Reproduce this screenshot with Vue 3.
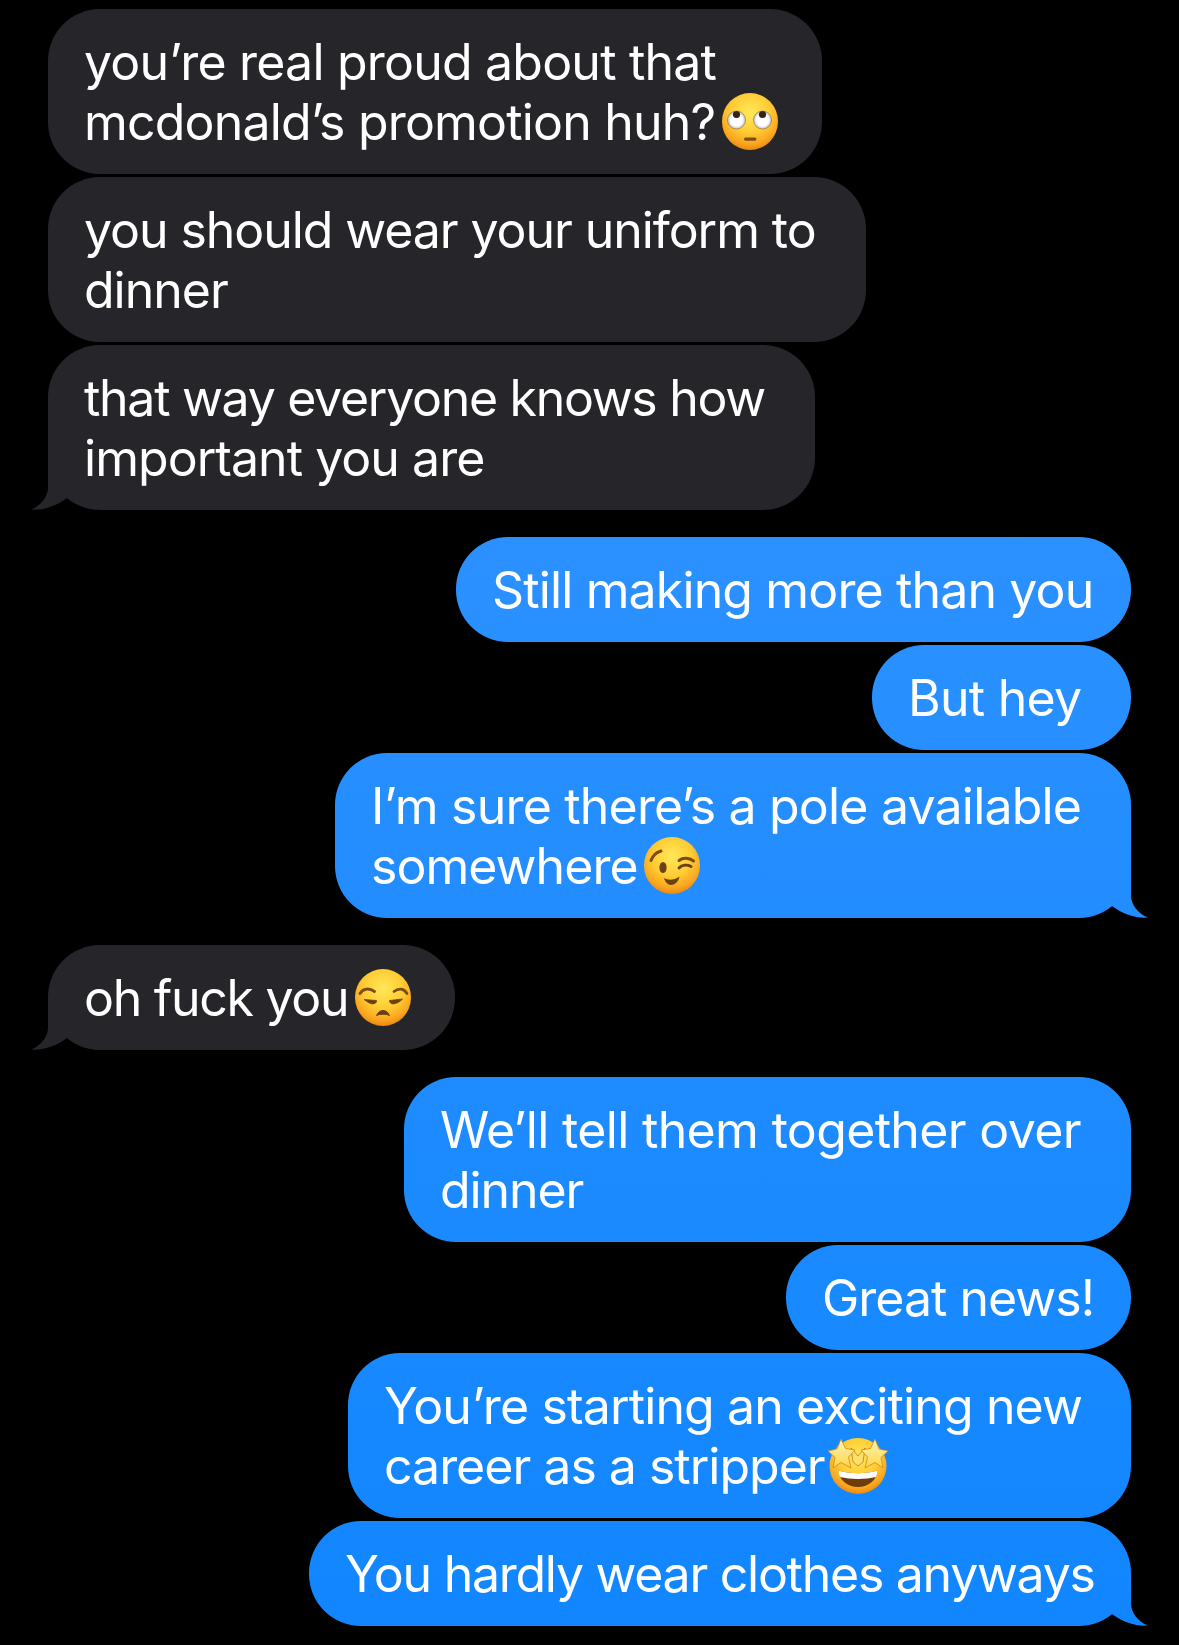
<script setup>
const groups = [
  { side: 'in', items: [
    { width: 774, lines: [['you’re real proud about that', -0.79], ['mcdonald’s promotion huh?', -0.82]], emoji: 'roll' },
    { width: 818, lines: [['you should wear your uniform to', -1.07], ['dinner', -1]] },
    { width: 767, lines: [['that way everyone knows how', -1.29], ['important you are', -0.96]], tail: true },
  ]},
  { side: 'out', items: [
    { width: 675, lines: [['Still making more than you', -0.86]] },
    { width: 259, lines: [['But hey', -0.75]] },
    { width: 796, lines: [['I’m sure there’s a pole available', -0.8], ['somewhere', -0.95]], emoji: 'wink', tail: true },
  ]},
  { side: 'in', items: [
    { width: 407, lines: [['oh fuck you', -1.28]], emoji: 'unamused', tail: true },
  ]},
  { side: 'out', items: [
    { width: 727, lines: [['We’ll tell them together over', -0.66], ['dinner', -1.07]] },
    { width: 345, lines: [['Great news!', -0.99]] },
    { width: 783, lines: [['You’re starting an exciting new', -0.87], ['career as a stripper', -1]], emoji: 'star' },
    { width: 822, lines: [['You hardly wear clothes anyways', -1.27]], tail: true },
  ]},
]
</script>

<template>
  <main class="thread">
    <svg class="defs" width="0" height="0" aria-hidden="true">
      <defs>
        <radialGradient id="face" cx="0.5" cy="0.34" r="0.7">
          <stop offset="0" stop-color="#ffe85a" />
          <stop offset="0.5" stop-color="#ffcc33" />
          <stop offset="0.8" stop-color="#f9a51f" />
          <stop offset="1" stop-color="#e67c0c" />
        </radialGradient>
        <linearGradient id="star-fill" x1="0" y1="0" x2="0" y2="1">
          <stop offset="0" stop-color="#fff6b8" />
          <stop offset="1" stop-color="#fcd445" />
        </linearGradient>
        <radialGradient id="eye-white" cx="0.5" cy="0.5" r="0.55">
          <stop offset="0.6" stop-color="#ffffff" />
          <stop offset="1" stop-color="#a9acb2" />
        </radialGradient>
      </defs>
    </svg>

    <section v-for="(group, g) in groups" :key="g" class="group" :class="group.side">
      <div v-for="(item, i) in group.items" :key="i" class="bubble" :style="{ width: item.width + 'px' }">
        <template v-for="(line, l) in item.lines" :key="l"><br v-if="l > 0" /><span :style="{ letterSpacing: line[1] + 'px' }">{{ line[0] }}</span></template>

        <svg v-if="item.emoji === 'roll'" class="emoji" viewBox="0 0 56 57" aria-hidden="true">
          <ellipse cx="28" cy="28.5" rx="28" ry="28.5" fill="url(#face)" />
          <circle cx="14.5" cy="27" r="9" fill="url(#eye-white)" stroke="#8a5a18" stroke-opacity=".5" />
          <circle cx="40.5" cy="27" r="9" fill="url(#eye-white)" stroke="#8a5a18" stroke-opacity=".5" />
          <circle cx="14.5" cy="21.5" r="3.6" fill="#33241a" />
          <circle cx="40.5" cy="21.5" r="3.6" fill="#33241a" />
          <rect x="22" y="44.5" width="12.5" height="3.2" rx="1.6" fill="#7d4c12" />
        </svg>

        <svg v-else-if="item.emoji === 'wink'" class="emoji" viewBox="0 0 56 57" aria-hidden="true">
          <ellipse cx="28" cy="28.5" rx="28" ry="28.5" fill="url(#face)" />
          <path d="M7 23.5C8.500 19 12 15.500 17 14" fill="none" stroke="#7d4c12" stroke-width="3" stroke-linecap="round" />
          <path d="M35 23.500C39 20.500 45 20.500 49.500 24" fill="none" stroke="#7d4c12" stroke-width="3" stroke-linecap="round" />
          <ellipse cx="19" cy="30.500" rx="3.600" ry="5.500" fill="#6b4013" />
          <path d="M35 31C38 27.800 43 27.500 47 29.500" fill="none" stroke="#6b4013" stroke-width="3" stroke-linecap="round" />
          <path d="M20 41C24 43.500 30 43.500 35.500 39.500C34.500 45 30.500 48 27 48C24 48 21 45 20 41Z" fill="#6b4013" />
        </svg>

        <svg v-else-if="item.emoji === 'unamused'" class="emoji" viewBox="0 0 56 57" aria-hidden="true">
          <ellipse cx="28" cy="28.500" rx="28" ry="28.500" fill="url(#face)" />
          <path d="M5 24.500C8 19.500 14 18.500 19.500 22.500" fill="none" stroke="#7d4c12" stroke-width="2.800" stroke-linecap="round" />
          <path d="M39 22.500C44 18.500 49 19.500 52 24.500" fill="none" stroke="#7d4c12" stroke-width="2.800" stroke-linecap="round" />
          <path d="M9 30.500L21.500 31.500C22 34.500 18 35.500 15.500 34.500C13.500 33.500 11 32 9 30.500Z" fill="#6b4013" stroke="#6b4013" stroke-width=".8" stroke-linejoin="round" />
          <path d="M34.500 31.500L47.500 30C45.500 32 43.500 33.500 40.500 34.500C37.500 35.500 34.500 34.500 34.500 31.500Z" fill="#6b4013" stroke="#6b4013" stroke-width=".8" stroke-linejoin="round" />
          <path d="M21.500 46.500C23 43 25.500 41.500 28 41.500C30.500 41.500 33 43 34.500 46.500C32 44.800 24 44.800 21.500 46.500Z" fill="#6b4013" stroke="#6b4013" stroke-width="1" stroke-linejoin="round" />
        </svg>

        <svg v-else-if="item.emoji === 'star'" class="emoji star" viewBox="0 0 60 57" aria-hidden="true">
          <ellipse cx="30" cy="29" rx="28.500" ry="28" fill="url(#face)" />
          <path d="M23 11L30 19L37 11L35 25L30 29L25 25Z" fill="#fde06a" stroke="#a8661a" stroke-opacity=".7" stroke-width=".9" />
          <path d="M13 2L17.500 11.500L27 13L20.500 20L23 31L13 25.500L5 31L7 20.500L0 14L9 12Z" fill="url(#star-fill)" stroke="#c98a20" stroke-width=".8" stroke-linejoin="round" />
          <path d="M47 2L51 12L60 14L53 20.500L55 31L47 25.500L37 31L39.500 20L33 13L42.500 11.500Z" fill="url(#star-fill)" stroke="#c98a20" stroke-width=".8" stroke-linejoin="round" />
          <path d="M10.500 33.500C22 37 38 37 49.500 33.500C49 43 40.500 50 30 50C19.500 50 11 43 10.500 33.500Z" fill="#6f3d0c" />
          <path d="M10.500 33.500C22 37 38 37 49.500 33.500C49.400 36 48.800 38 48 40C38 42.500 22 42.500 12 40C11.200 38 10.600 36 10.500 33.500Z" fill="#fdfdfb" />
        </svg>

        <span v-if="item.tail" class="tail"></span>
      </div>
    </section>
  </main>
</template>

<style scoped>
.thread {
  box-sizing: border-box;
  height: 1645px;
  padding: 9px 48px 0;
  display: flex;
  flex-direction: column;
  gap: 27px;
  background: #000;
  font-family: Inter, "Liberation Sans", sans-serif;
  overflow: hidden;
}

.defs {
  position: absolute;
}

.group {
  display: flex;
  flex-direction: column;
  gap: 3px;
}

.group.in {
  align-items: flex-start;
}

.group.out {
  align-items: flex-end;
}

.bubble {
  position: relative;
  box-sizing: border-box;
  padding: 22.5px 0 22.5px 36px;
  border-radius: 52px;
  font-size: 50px;
  line-height: 60px;
  color: #fff;
  white-space: pre;
}

.in .bubble {
  background: #26262a;
}

.out .bubble {
  background: linear-gradient(#2c91ff 530px, #1186ff 1630px) fixed;
  background-size: 100% 1645px;
}

.emoji {
  width: 56px;
  height: 57px;
  margin: -10px 0 -10px 6.500px;
  vertical-align: -0.3px;
}

.emoji.star {
  width: 60px;
  margin-left: 3.500px;
}

.tail {
  position: absolute;
  bottom: 0;
  width: 40px;
  height: 52px;
  background: inherit;
}

.in .tail {
  left: -18px;
  clip-path: path("M18 0L18 30C18 38 11 48 1 51.500C12 52.500 25 49 37 40L37 0Z");
}

.out .tail {
  right: -18px;
  clip-path: path("M22 0L22 30C22 38 29 48 39 51.500C28 52.500 15 49 3 40L3 0Z");
}
</style>

<style>
html, body {
  background: #000;
}
</style>
